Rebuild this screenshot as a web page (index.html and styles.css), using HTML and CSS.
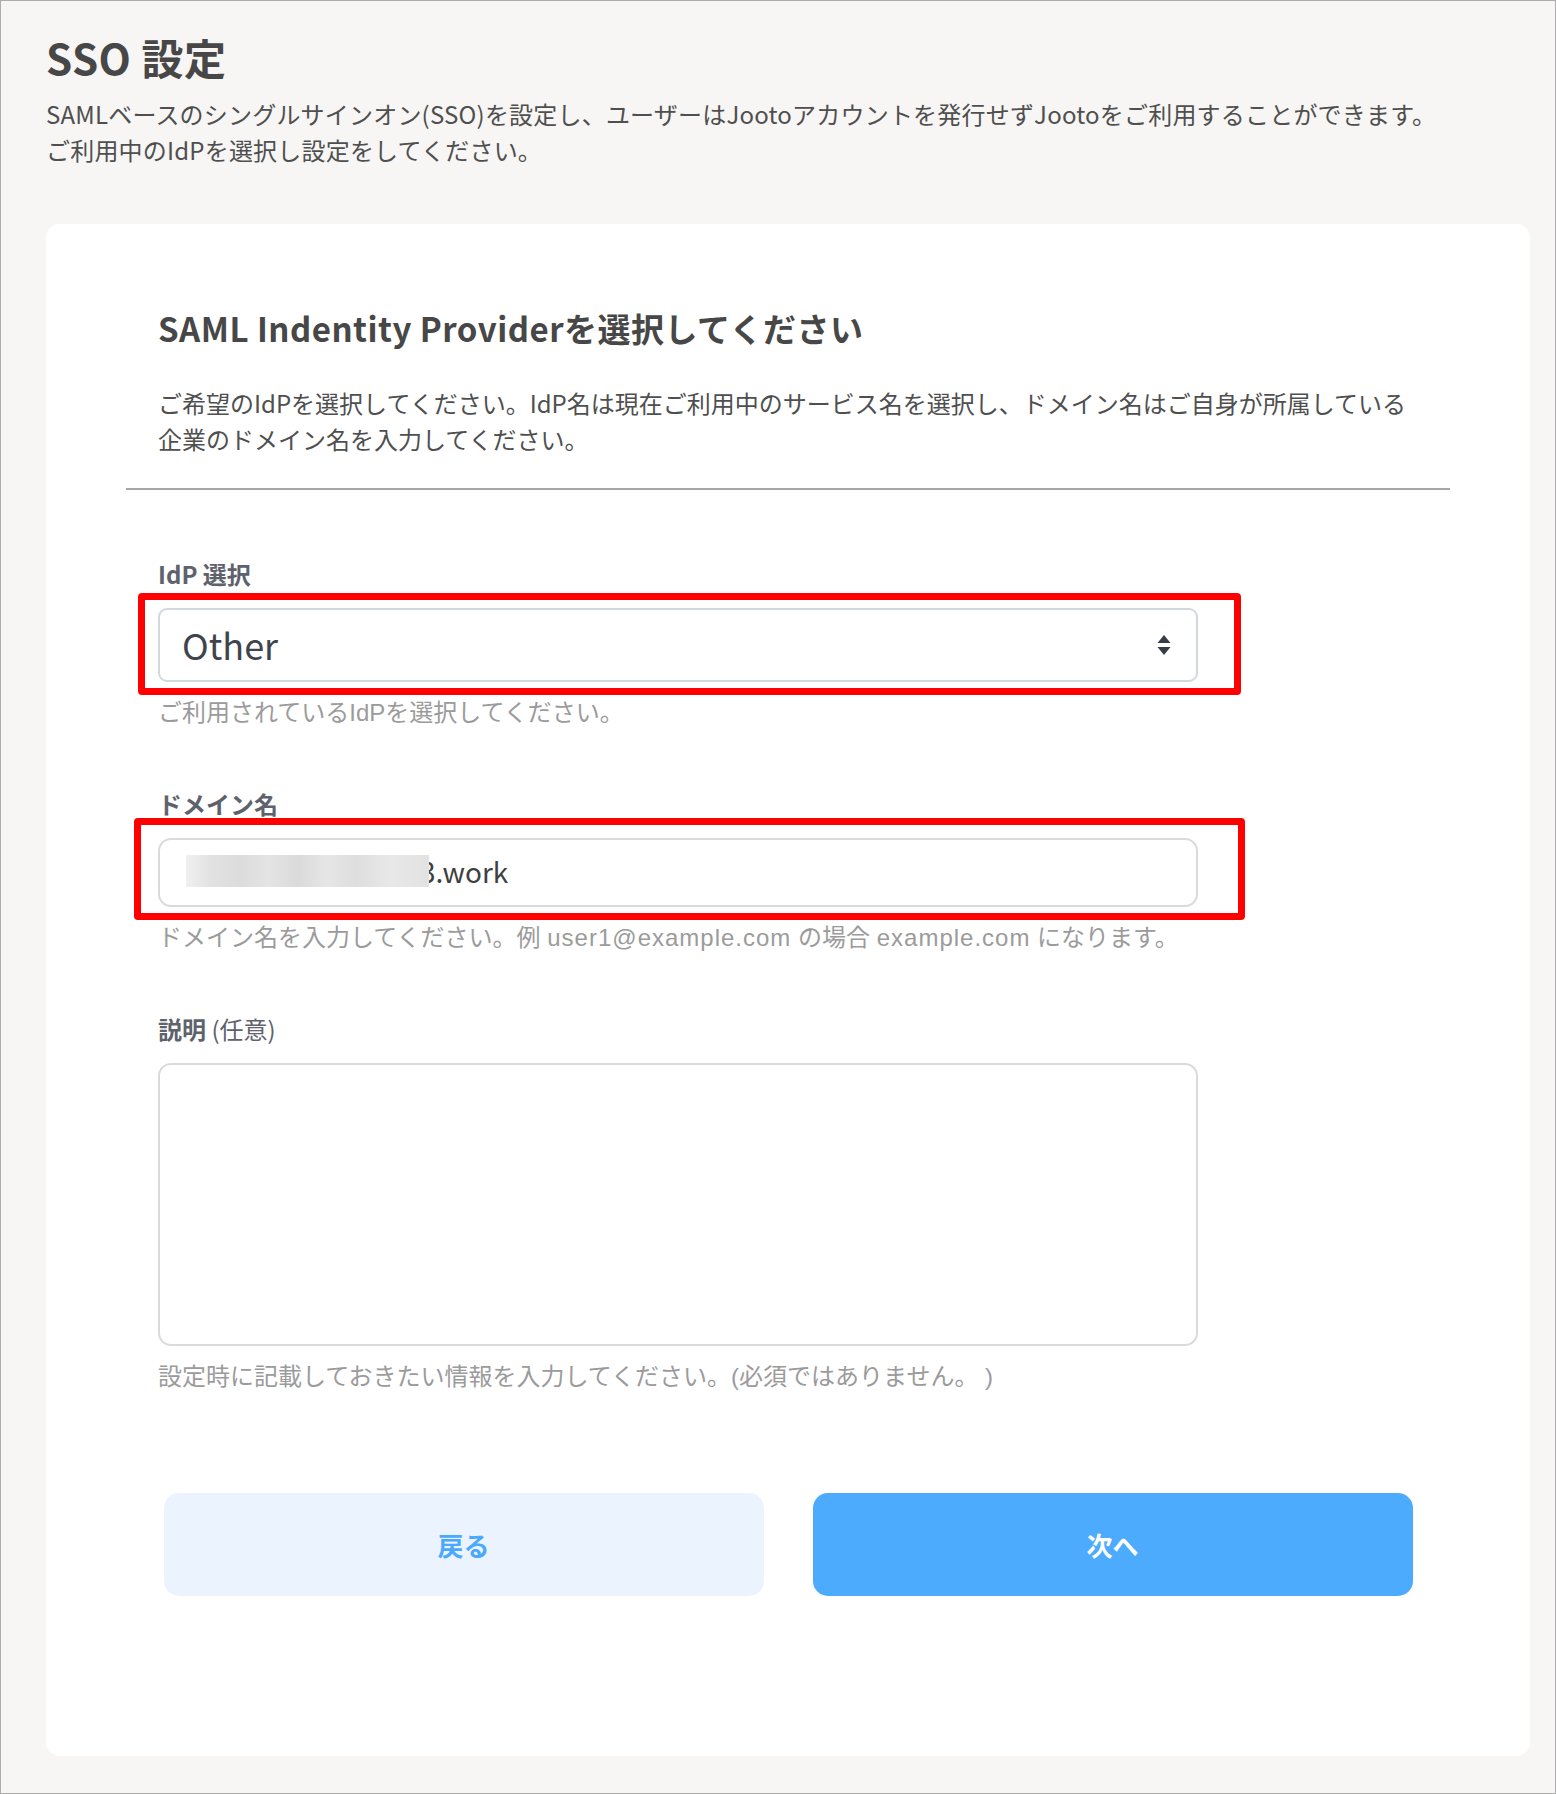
FILE: index.html
```html
<!DOCTYPE html>
<html lang="ja">
<head>
<meta charset="utf-8">
<title>SSO 設定</title>
<link rel="stylesheet" href="styles.css">
</head>
<body>
<div class="page">
  <h1 class="page-title">SSO 設定</h1>
  <p class="lead">SAMLベースのシングルサインオン(SSO)を設定し、ユーザーはJootoアカウントを発行せずJootoをご利用することができます。<br>ご利用中のIdPを選択し設定をしてください。</p>

  <section class="card">
    <div class="card-head">
      <h2 class="card-title">SAML Indentity Providerを選択してください</h2>
      <p class="card-desc">ご希望のIdPを選択してください。IdP名は現在ご利用中のサービス名を選択し、ドメイン名はご自身が所属している<br>企業のドメイン名を入力してください。</p>
    </div>
    <hr class="divider">

    <div class="form">
      <div class="field">
        <div class="label">IdP 選択</div>
        <div class="control-wrap">
          <div class="select">
            <span class="select-value">Other</span>
            <svg class="select-arrow" width="14" height="22" viewBox="0 0 14 22"><path d="M7 0 L13.5 8 L0.5 8 Z M0.5 12 L13.5 12 L7 20 Z" fill="#373d47"/></svg>
          </div>
          <div class="highlight hl-select"></div>
        </div>
        <div class="help">ご利用されているIdPを選択してください。</div>
      </div>

      <div class="field">
        <div class="label">ドメイン名</div>
        <div class="control-wrap">
          <div class="input"><span class="blurred"></span><span class="input-text">3.work</span></div>
          <div class="highlight hl-input"></div>
        </div>
        <div class="help">ドメイン名を入力してください。例 <span class="latin">user1@example.com</span> の場合 <span class="latin">example.com</span> になります。</div>
      </div>

      <div class="field">
        <div class="label">説明 <span class="label-opt">(任意)</span></div>
        <textarea class="textarea"></textarea>
        <div class="help">設定時に記載しておきたい情報を入力してください。(必須ではありません。 )</div>
      </div>
    </div>

    <div class="actions">
      <button class="btn btn-back">戻る</button>
      <button class="btn btn-next">次へ</button>
    </div>
  </section>
</div>
</body>
</html>
```

FILE: styles.css
```css
* { box-sizing: border-box; }
html, body { margin: 0; padding: 0; }
body {
  font-family: "Noto Sans CJK JP", "Noto Sans", sans-serif;
  color: #4a4a4a;
  background: #f7f6f5;
}
.page {
  width: 1556px;
  height: 1794px;
  border: 1px solid #acacac;
  background: #f7f6f5;
  padding: 31px 25px 0 45px;
}
.page-title {
  margin: 0;
  font-size: 42px;
  line-height: 50px;
  font-weight: 700;
  color: #474747;
  letter-spacing: 0.5px;
}
.lead {
  margin: 14px 0 0;
  font-size: 24px;
  line-height: 36px;
  color: #4f4f4f;
  letter-spacing: 0.2px;
}
.card {
  margin-top: 56px;
  width: 1484px;
  height: 1532px;
  background: #fff;
  border-radius: 14px;
  padding: 80px 80px 0;
}
.card-head { padding: 0 32px; }
.card-title {
  margin: 0;
  font-size: 33px;
  line-height: 48px;
  font-weight: 700;
  color: #474747;
  letter-spacing: 0.5px;
}
.card-desc {
  margin: 33px 0 0;
  font-size: 24px;
  line-height: 36px;
  color: #4f4f4f;
}
.divider {
  margin: 31px 0 0;
  border: 0;
  height: 2px;
  background: #a6a6a6;
}
.form { padding: 0 32px; }
.field { margin-top: 55px; width: 1040px; }
.field:first-child { margin-top: 66px; }
.label {
  font-size: 24px;
  line-height: 36px;
  font-weight: 700;
  color: #5e626c;
  margin-bottom: 16px;
}
.label-opt { font-weight: 400; }
.control-wrap { position: relative; }
.select {
  height: 74px;
  border: 2px solid #d3d8de;
  border-radius: 9px;
  display: flex;
  align-items: center;
  justify-content: space-between;
  padding: 0 25px 0 22px;
}
.select-value {
  font-size: 36px;
  color: #3f444c;
  line-height: 1;
  margin-top: -3px;
}
.select-arrow { display: block; margin-top: 2px; }
.input {
  height: 69px;
  border: 2px solid #dadada;
  border-radius: 13px;
  display: flex;
  align-items: center;
  padding: 0 26px;
}
.blurred {
  display: inline-block;
  width: 243px;
  height: 32px;
  margin-right: -9px;
  margin-top: -3px;
  position: relative;
  z-index: 1;
  background: linear-gradient(90deg, #f0f0f0 0%, #e2e2e2 10%, #dcdcdc 22%, #e4e4e4 34%, #dadada 46%, #e6e6e6 58%, #dedede 70%, #e8e8e8 84%, #e2e2e2 100%);
}
.input-text {
  font-size: 28px;
  color: #3f3f3f;
  line-height: 1;
  margin-top: -4px;
}
.highlight {
  position: absolute;
  border: 7px solid #ff0000;
  border-radius: 4px;
  pointer-events: none;
}
.hl-select { left: -20px; top: -15px; right: -43px; bottom: -13px; }
.hl-input { left: -24px; top: -20px; right: -47px; bottom: -13px; }
.help {
  margin-top: 13px;
  font-family: "Liberation Sans", "Noto Sans CJK JP", sans-serif;
  font-size: 24px;
  line-height: 36px;
  color: #9b9b9b;
}
.help .latin { letter-spacing: 1px; }
.textarea {
  display: block;
  width: 1040px;
  height: 283px;
  border: 2px solid #dadada;
  border-radius: 13px;
  resize: none;
  font-family: inherit;
  background: #fff;
}
.actions {
  margin-top: 98px;
  display: flex;
  justify-content: center;
  gap: 49px;
}
.btn {
  width: 600px;
  height: 103px;
  border: 0;
  border-radius: 15px;
  font-family: "Noto Sans CJK JP", sans-serif;
  font-size: 26px;
  font-weight: 700;
}
.btn-back { background: #ebf4fe; color: #4aa9fd; }
.btn-next { background: #4dabfe; color: #fff; }
```
